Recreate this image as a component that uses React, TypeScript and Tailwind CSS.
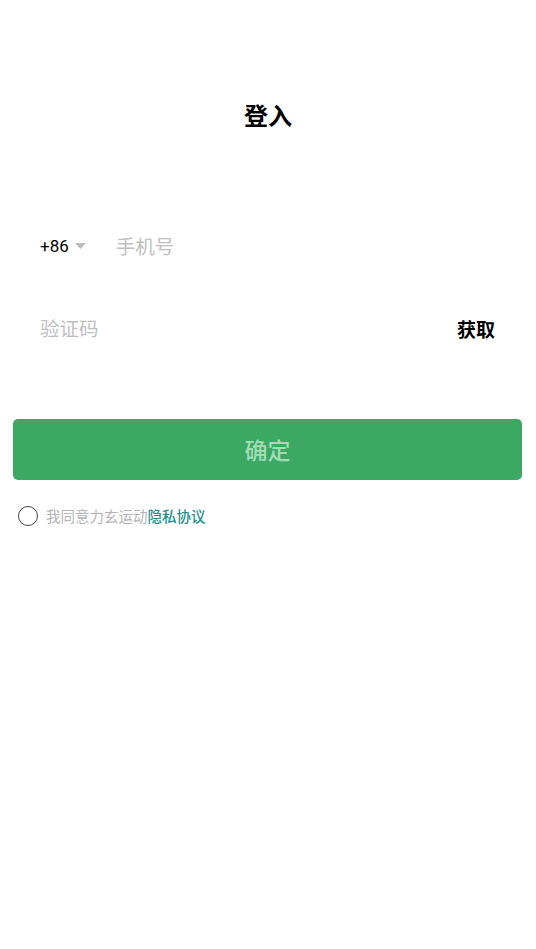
import { useState } from "react";

// Écran de connexion — téléphone + code de vérification.

export default function App() {
  const [agreed, setAgreed] = useState(false);

  return (
    <div
      className="min-h-screen bg-white text-black"
      style={{ fontFamily: '"Noto Sans CJK SC", "Noto Sans", sans-serif' }}
    >
      <h1 className="pt-[100px] text-center text-[24px] font-bold leading-[30px]">登入</h1>

      {/* Téléphone */}
      <div className="mt-[91px] flex h-[50px] items-center pl-[40px]">
        <span className="text-[17px] leading-none" style={{ fontFamily: '"Roboto", "Noto Sans CJK SC", sans-serif' }}>+86</span>
        <svg className="ml-[6px]" width="11" height="7" viewBox="0 0 11 7">
          <path d="M0 0 L11 0 L5.5 6 Z" fill="#bdbdbd" />
        </svg>
        <span className="ml-[30px] text-[19.5px] leading-none text-[#bfbfbf]">手机号</span>
      </div>

      {/* Code */}
      <div className="mt-[32px] flex h-[50px] items-center justify-between pl-[40px] pr-[41px]">
        <span className="text-[19.5px] leading-none text-[#bfbfbf]">验证码</span>
        <button className="text-[19px] font-bold leading-none text-black">获取</button>
      </div>

      <button className="mt-[66px] ml-[13px] flex h-[61px] w-[509px] items-center justify-center rounded-[5px] bg-[#3ba864] text-[23px] font-medium text-[#a4dcb6]">
        确定
      </button>

      <div className="mt-[24px] flex h-[24px] items-center pl-[18px]">
        <button
          onClick={() => setAgreed(!agreed)}
          className={`h-[20px] w-[20px] rounded-full border-[1.5px] ${agreed ? "border-[#3ba864] bg-[#3ba864]" : "border-[#444]"}`}
        />
        <span className="ml-[8px] text-[14.5px] leading-none text-[#b3b3b3]">
          我同意力玄运动<span className="font-medium text-[#25918c]">隐私协议</span>
        </span>
      </div>
    </div>
  );
}
